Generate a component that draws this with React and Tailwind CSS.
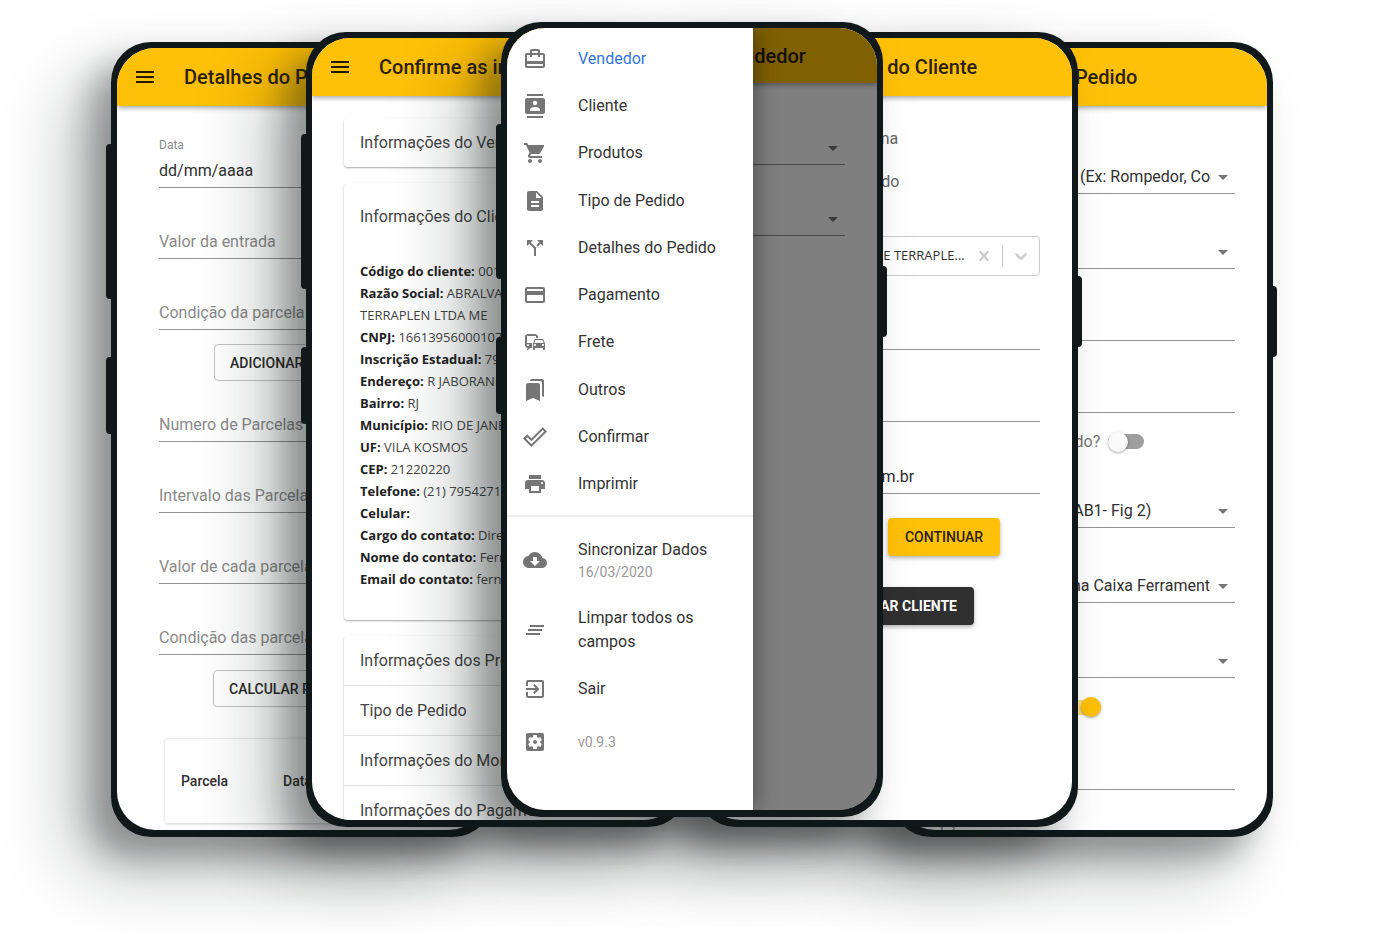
import { useId } from "react";
import {
  MdArrowDropDown, MdBookmarks, MdCallSplit, MdCardTravel, MdClearAll, MdCloudDownload,
  MdCommute, MdContacts, MdDescription, MdDoneOutline, MdExitToApp, MdMenu, MdPayment,
  MdPrint, MdSettingsApplications, MdShoppingCart,
} from "react-icons/md";

function Phone({ className, children }) {
  return (
    <section className={`relative h-[795px] w-[382px] shrink-0 rounded-[40px] bg-[#101819] p-[6px] pb-[7px] shadow-[-20px_20px_30px_rgba(16,24,22,0.3),-40px_36px_70px_rgba(16,24,22,0.28)] ${className}`}>
      <span className="absolute top-[102px] -left-[5px] h-[155px] w-2 rounded-sm bg-[#101819]" />
      <span className="absolute top-[315px] -left-[5px] h-[77px] w-2 rounded-sm bg-[#101819]" />
      <span className="absolute top-[244px] -right-1 h-[71px] w-2 rounded-sm bg-[#101819]" />
      <div className="relative h-full overflow-hidden rounded-[38px] bg-white">{children}</div>
    </section>
  );
}

function TopBar({ title, className = "h-[58px]" }) {
  return (
    <header className={`relative flex items-center gap-[27px] bg-[#ffc107] px-4 shadow-[0_2px_5px_rgba(0,0,0,0.35)] ${className}`}>
      <button type="button" aria-label="Abrir menu" className="text-[#231b01]">
        <MdMenu className="size-6" />
      </button>
      <h2 className="text-xl font-medium whitespace-nowrap text-[#2c2203]">{title}</h2>
    </header>
  );
}

function Field({ label, value, className = "h-[71px]" }) {
  return (
    <div className={`flex flex-col justify-end border-b border-[#949494] pb-1 ${className}`}>
      <input
        aria-label={label}
        placeholder={label}
        defaultValue={value}
        className="h-6 w-full bg-transparent text-base text-[#303030] outline-none placeholder:text-[#8a8a8a]"
      />
    </div>
  );
}

function Select({ label, value = "", className = "h-[75px]" }) {
  return (
    <div className={`flex items-end border-b border-[#949494] pb-1 ${className}`}>
      <div className="relative flex w-full items-center">
        <select aria-label={label} defaultValue={value} className="h-6 w-full appearance-none overflow-hidden bg-transparent pr-6 text-base text-clip whitespace-nowrap text-[#303030] outline-none">
          <option value={value}>{value}</option>
        </select>
        <MdArrowDropDown className="pointer-events-none absolute right-0 size-6 text-[#757575]" />
      </div>
    </div>
  );
}

function Switch({ label, checked = false }) {
  const id = useId();
  return (
    <div className="flex items-center gap-2">
      <label htmlFor={id} className="text-base whitespace-nowrap text-[#757575]">{label}</label>
      <span className="relative flex h-5 w-9 items-center">
        <input id={id} type="checkbox" role="switch" defaultChecked={checked} className="peer h-[15px] w-9 appearance-none rounded-full bg-[#9e9e9e] checked:bg-[#ffdf80]" />
        <span className="pointer-events-none absolute left-0 size-5 rounded-full bg-[#fafafa] shadow-[0_1px_3px_rgba(0,0,0,0.35)] peer-checked:left-4 peer-checked:bg-[#ffc107]" />
      </span>
    </div>
  );
}

function PaymentScreen() {
  const id = useId();
  return (
    <Phone className="z-10 mt-5">
      <TopBar title="Detalhes do Pedido" />
      <form className="px-[42px]">
        <div className="flex h-[82px] flex-col justify-end border-b border-[#949494] pb-1">
          <label htmlFor={id} className="text-xs text-[#8a8a8a]">Data</label>
          <input id={id} placeholder="dd/mm/aaaa" className="mt-[6px] h-6 w-full bg-transparent text-base text-[#303030] outline-none placeholder:text-[#303030]" />
        </div>
        <Field label="Valor da entrada" />
        <Field label="Condição da parcela" />
        <div className="mt-[14px] flex justify-center">
          <button type="button" className="h-[37px] w-44 rounded border border-[#c4c4c4] px-[15px] text-left text-sm font-medium whitespace-nowrap text-[#2b2b2b]">ADICIONAR PARCELA</button>
        </div>
        <Field label="Numero de Parcelas" className="h-[61px]" />
        <Field label="Intervalo das Parcelas" />
        <Field label="Valor de cada parcela" />
        <Field label="Condição das parcelas" />
        <div className="mt-[15px] flex justify-center">
          <button type="button" className="h-[37px] w-[178px] rounded border border-[#c4c4c4] px-[15px] text-left text-sm font-medium whitespace-nowrap text-[#2b2b2b]">CALCULAR PARCELAS</button>
        </div>
      </form>
      <div className="mx-12 mt-8 overflow-hidden rounded shadow-[0_0_3px_rgba(0,0,0,0.2)]">
        <table className="w-full text-left text-sm text-[#303030]">
          <thead>
            <tr className="h-[84px] border-b border-[#e0e0e0]">
              <th className="w-[102px] pl-4 font-medium">Parcela</th>
              <th className="pl-4 font-medium">Data</th>
              <th className="pl-4 font-medium">Valor</th>
            </tr>
          </thead>
        </table>
      </div>
    </Phone>
  );
}

const clientInfo = [
  ["Código do cliente:", "001284"],
  ["Razão Social:", "ABRALVA LOCACOES E TERRAPLEN LTDA ME"],
  ["CNPJ:", "16613956000107"],
  ["Inscrição Estadual:", "79542710"],
  ["Endereço:", "R JABORANDI 120"],
  ["Bairro:", "RJ"],
  ["Município:", "RIO DE JANEIRO"],
  ["UF:", "VILA KOSMOS"],
  ["CEP:", "21220220"],
  ["Telefone:", "(21) 79542710"],
  ["Celular:", ""],
  ["Cargo do contato:", "Diretor"],
  ["Nome do contato:", "Fernando"],
  ["Email do contato:", "fernando@email.com"],
];

const card = "rounded-sm bg-white shadow-[0_1px_2px_rgba(0,0,0,0.35)]";
const sections = ["Informações dos Produtos", "Tipo de Pedido", "Informações do Montagem", "Informações do Pagamento"];

function ConfirmScreen() {
  return (
    <Phone className="z-20 mt-[10px] -ml-[187px]">
      <TopBar title="Confirme as informações" />
      <div className="flex flex-col gap-4 px-8 pt-[22px] text-base text-[#444]">
        <button type="button" className={`h-[49px] px-4 text-left ${card}`}>Informações do Vendedor</button>
        <section className={`h-[437px] px-4 pt-[22px] ${card}`}>
          <h3>Informações do Cliente</h3>
          <dl className="mt-[31px] font-['Open_Sans','Noto_Sans',sans-serif] text-[13px] leading-[22px] text-[#444]">
            {clientInfo.map(([term, value]) => (
              <div key={term}>
                <dt className="inline font-bold text-[#222]">{term}</dt> <dd className="inline">{value}</dd>
              </div>
            ))}
          </dl>
        </section>
        <div className={card}>
          {sections.map((label) => (
            <button key={label} type="button" className="block h-[50px] w-full border-b border-[#e0e0e0] px-4 text-left">{label}</button>
          ))}
        </div>
      </div>
    </Phone>
  );
}

const menu = [
  [MdCardTravel, "Vendedor"],
  [MdContacts, "Cliente"],
  [MdShoppingCart, "Produtos"],
  [MdDescription, "Tipo de Pedido"],
  [MdCallSplit, "Detalhes do Pedido"],
  [MdPayment, "Pagamento"],
  [MdCommute, "Frete"],
  [MdBookmarks, "Outros"],
  [MdDoneOutline, "Confirmar"],
  [MdPrint, "Imprimir"],
];

function MenuItem({ icon: Icon, active, className = "h-full", children }) {
  return (
    <li>
      <a href="#" className={`flex items-center gap-[31px] px-4 ${active ? "text-[#3275dc]" : "text-[#333]"} ${className}`}>
        <Icon className="size-6 shrink-0 text-[#757575]" />
        <span>{children}</span>
      </a>
    </li>
  );
}

function MenuScreen() {
  return (
    <Phone className="z-30 -ml-[187px]">
      <TopBar title="Informações do Vendedor" className="h-[55px]" />
      <form className="px-8 pt-[11px]">
        <Select label="Vendedor" className="h-[71px]" />
        <Select label="Filial" className="h-[71px]" />
      </form>
      <div className="absolute inset-0 bg-black/50" />
      <nav aria-label="Menu principal" className="absolute inset-y-0 left-0 w-[246px] bg-white pt-[7px] text-base shadow-[4px_0_20px_rgba(0,0,0,0.35)]">
        <ul className="grid h-[473px] auto-rows-fr">
          {menu.map(([icon, label], i) => (
            <MenuItem key={label} icon={icon} active={i === 0}>{label}</MenuItem>
          ))}
        </ul>
        <ul className="mt-[7px] border-t-2 border-[#ececec] pt-[7px]">
          <MenuItem icon={MdCloudDownload} className="h-[72px]">
            Sincronizar Dados
            <small className="block text-sm text-[#999]">16/03/2020</small>
          </MenuItem>
          <MenuItem icon={MdClearAll} className="h-[68px]">Limpar todos os campos</MenuItem>
          <MenuItem icon={MdExitToApp} className="h-[49px]">Sair</MenuItem>
          <MenuItem icon={MdSettingsApplications} className="h-[58px]"><span className="text-sm text-[#999]">v0.9.3</span></MenuItem>
        </ul>
      </nav>
    </Phone>
  );
}

function ClientScreen() {
  return (
    <Phone className="z-20 mt-[10px] -ml-[187px]">
      <TopBar title="Informações do Cliente" />
      <form className="px-8 pt-[21px]">
        <fieldset className="text-base text-[#666]">
          <label className="flex h-[43px] items-center gap-3"><input type="radio" name="origem" defaultChecked className="size-5" />Buscar no sistema</label>
          <label className="flex h-[43px] items-center gap-3"><input type="radio" name="origem" className="size-5" />Cliente cadastrado</label>
        </fieldset>
        <div className="mt-[33px] flex h-10 items-center rounded border border-[#ccc] pl-5 text-[#ccc]">
          <span className="flex-1 truncate font-['Open_Sans','Noto_Sans',sans-serif] text-[13px] text-[#333]">ABRALVA LOCACOES E TERRAPLENAGEM</span>
          <button type="button" aria-label="Limpar" className="px-2">
            <svg viewBox="0 0 20 20" className="size-5 fill-current"><path d="M14.348 14.849c-0.469 0.469-1.229 0.469-1.697 0l-2.651-3.030-2.651 3.029c-0.469 0.469-1.229 0.469-1.697 0-0.469-0.469-0.469-1.229 0-1.697l2.758-3.15-2.759-3.152c-0.469-0.469-0.469-1.228 0-1.697s1.228-0.469 1.697 0l2.652 3.031 2.651-3.031c0.469-0.469 1.228-0.469 1.697 0s0.469 1.229 0 1.697l-2.758 3.152 2.758 3.15c0.469 0.469 0.469 1.229 0 1.698z" /></svg>
          </button>
          <span className="h-[22px] w-px bg-[#ccc]" />
          <button type="button" aria-label="Abrir lista" className="px-2">
            <svg viewBox="0 0 20 20" className="size-5 fill-current"><path d="M4.516 7.548c0.436-0.446 1.043-0.481 1.576 0l3.908 3.747 3.908-3.747c0.533-0.481 1.141-0.446 1.574 0 0.436 0.445 0.408 1.197 0 1.615-0.406 0.418-4.695 4.502-4.695 4.502-0.217 0.223-0.502 0.335-0.787 0.335s-0.57-0.112-0.789-0.335c0 0-4.287-4.084-4.695-4.502s-0.436-1.17 0-1.615z" /></svg>
          </button>
        </div>
        <Field label="" className="h-[74px]" />
        <Field label="" className="h-[72px]" />
        <Field label="" value="fernandoa@email.com.br" className="h-[72px]" />
        <div className="mt-6 flex flex-wrap justify-center gap-x-4 gap-y-[31px] text-sm font-medium">
          <button type="button" className="h-[38px] w-[98px] rounded bg-[#ffc107] text-[#2c2203] shadow-[0_2px_4px_rgba(0,0,0,0.3)]">VOLTAR</button>
          <button type="button" className="h-[38px] w-28 rounded bg-[#ffc107] text-[#2c2203] shadow-[0_2px_4px_rgba(0,0,0,0.3)]">CONTINUAR</button>
          <button type="button" className="h-[38px] w-[174px] rounded bg-[#303030] font-bold text-white shadow-[0_2px_4px_rgba(0,0,0,0.3)]">CADASTRAR CLIENTE</button>
        </div>
      </form>
    </Phone>
  );
}

function OrderScreen() {
  return (
    <Phone className="z-10 mt-5 -ml-[187px]">
      <TopBar title="Detalhes do Pedido" />
      <form className="px-8 pt-[13px]">
        <Select label="Modelo" value="Modelo: Ferramental (Ex: Rompedor, Concha)" />
        <Select label="Linha" />
        <Field label="" className="h-[72px]" />
        <Field label="" className="h-[72px]" />
        <div className="flex h-[57px] items-center"><Switch label="Equipamento instalado?" /></div>
        <Select label="Kit" value="Kit Hidráulico Base (AB1- Fig 2)" className="h-[58px]" />
        <Select label="Caixa" value="Instalação para a linha Caixa Ferramentas" />
        <Select label="Acessório" />
        <div className="flex h-[58px] items-center"><Switch label="Garantia adicional" checked /></div>
        <Field label="" className="h-[54px]" />
        <label className="mt-5 block text-base text-[#8a8a8a]">Opções</label>
      </form>
    </Phone>
  );
}

export default function App() {
  return (
    <main className="flex min-h-screen items-start justify-center overflow-hidden bg-white pt-[22px] pr-[6px] pb-24 font-[Roboto,sans-serif]">
      <PaymentScreen />
      <ConfirmScreen />
      <MenuScreen />
      <ClientScreen />
      <OrderScreen />
    </main>
  );
}
